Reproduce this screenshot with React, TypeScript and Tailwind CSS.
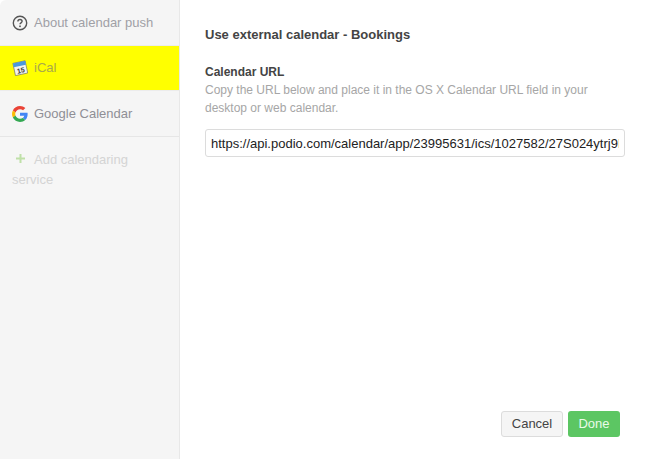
const fontStack = 'font-["Liberation_Sans",Arial,sans-serif]';

function HelpIcon() {
  return (
    <svg width="16" height="16" viewBox="0 0 16 16" fill="none" className="shrink-0">
      <circle cx="8" cy="8" r="6.7" stroke="#555" strokeWidth="1.4" />
      <path d="M5.9 6.400c0-1.200 1-1.900 2.100-1.900s2.100.7 2.100 1.800c0 1.600-2.100 1.500-2.100 3" stroke="#555" strokeWidth="1.4" fill="none" />
      <rect x="7.200" y="10.500" width="1.600" height="1.600" fill="#555" />
    </svg>
  );
}

function ICalIcon() {
  return (
    <svg width="16" height="16" viewBox="0 0 16 16" className="shrink-0">
      <g transform="rotate(-12 8 8)">
        <rect x="2" y="2" width="12.500" height="12.500" fill="#f4f4f0" stroke="#666" strokeWidth="0.6" />
        <rect x="2" y="2" width="12.500" height="4" fill="#4a98dc" />
        <text x="8.200" y="13" fontSize="7" fontWeight="700" textAnchor="middle" fill="#333" fontFamily="Liberation Sans">15</text>
      </g>
    </svg>
  );
}

function GoogleIcon() {
  return (
    <svg width="16" height="16" viewBox="0 0 48 48" className="shrink-0">
      <path fill="#EA4335" d="M24 9.500c3.500 0 6.700 1.200 9.200 3.600l6.900-6.900C35.900 2.400 30.500 0 24 0 14.600 0 6.500 5.400 2.600 13.200l8 6.200C12.400 13.700 17.700 9.500 24 9.500z" />
      <path fill="#4285F4" d="M46.900 24.500c0-1.600-.1-3.100-.4-4.500H24v9h12.900c-.6 3-2.200 5.500-4.800 7.200l7.700 6c4.500-4.200 7.100-10.300 7.100-17.700z" />
      <path fill="#FBBC05" d="M10.500 28.600c-.5-1.400-.8-3-.8-4.600s.3-3.200.8-4.600l-8-6.200C.9 16.500 0 20.100 0 24s.9 7.500 2.600 10.800l7.900-6.200z" />
      <path fill="#34A853" d="M24 48c6.500 0 11.900-2.100 15.900-5.800l-7.700-6c-2.200 1.500-4.900 2.300-8.200 2.300-6.300 0-11.600-4.200-13.500-9.900l-8 6.200C6.500 42.600 14.600 48 24 48z" />
    </svg>
  );
}

export default function App() {
  return (
    <div className={`${fontStack} flex h-[459px] w-[648px] overflow-hidden bg-white`}>
      <aside className="w-[180px] shrink-0 overflow-hidden rounded-tl-[6px] border-r border-[#e8e8e8] bg-[#f5f5f5] text-[13px]">
        <div className="flex h-[46px] items-center gap-[6px] border-b border-[#ececec] pl-[12px] text-[#a0a0a6]">
          <HelpIcon />
          <span>About calendar push</span>
        </div>
        <div className="flex h-[45px] items-center gap-[6px] border-b border-[#ececec] bg-[#ffff00] pl-[12px] text-[#a9a94a]">
          <ICalIcon />
          <span>iCal</span>
        </div>
        <div className="flex h-[46px] items-center gap-[6px] border-b border-[#e6e6e6] pl-[12px] text-[#8f8f95]">
          <GoogleIcon />
          <span>Google Calendar</span>
        </div>
        <div className="h-[63px] bg-[#f6f6f6] pt-[13px] pr-[30px] pl-[12px] leading-[20px] text-[#d4d4d4]">
          {/* plus is a glyph-weight cross in the reference, thicker than the lucide one */}
          <svg width="9" height="9" viewBox="0 0 9 9" className="mr-[9px] ml-[4px] inline-block align-[1px]">
            <path d="M3.500 0h2v3.500H9v2H5.500V9h-2V5.500H0v-2h3.500z" fill="#bfe0a8" />
          </svg>
          Add calendaring service
        </div>
      </aside>

      <main className="flex min-w-0 flex-1 flex-col pt-[27px] pr-[23px] pl-[25px]">
        <h1 className="text-[13px] leading-[15px] font-bold text-[#444]">Use external calendar - Bookings</h1>
        <h2 className="mt-[23px] text-[12px] leading-[15px] font-bold text-[#444]">Calendar URL</h2>
        <p className="mt-[1px] text-[12px] leading-[18px] text-[#a6a6a6]">
          Copy the URL below and place it in the OS X Calendar URL field in your desktop or web calendar.
        </p>
        <input
          readOnly
          value="https://api.podio.com/calendar/app/23995631/ics/1027582/27S024ytrj9Rk2mQ"
          className="mt-[12px] h-[28px] w-full rounded-[3px] border border-[#dcdcdc] px-[5px] text-[13px] text-[#222] outline-none"
        />
        <div className="mt-auto flex justify-end gap-[5px] pr-[5px] pb-[22px]">
          <button className="h-[26px] w-[62px] rounded-[3px] border border-[#dcdcdc] bg-[#f5f5f5] text-[13px] text-[#444]">Cancel</button>
          <button className="h-[26px] w-[52px] rounded-[3px] bg-[#5cc663] text-[13px] text-[#eafbe9]">Done</button>
        </div>
      </main>
    </div>
  );
}
